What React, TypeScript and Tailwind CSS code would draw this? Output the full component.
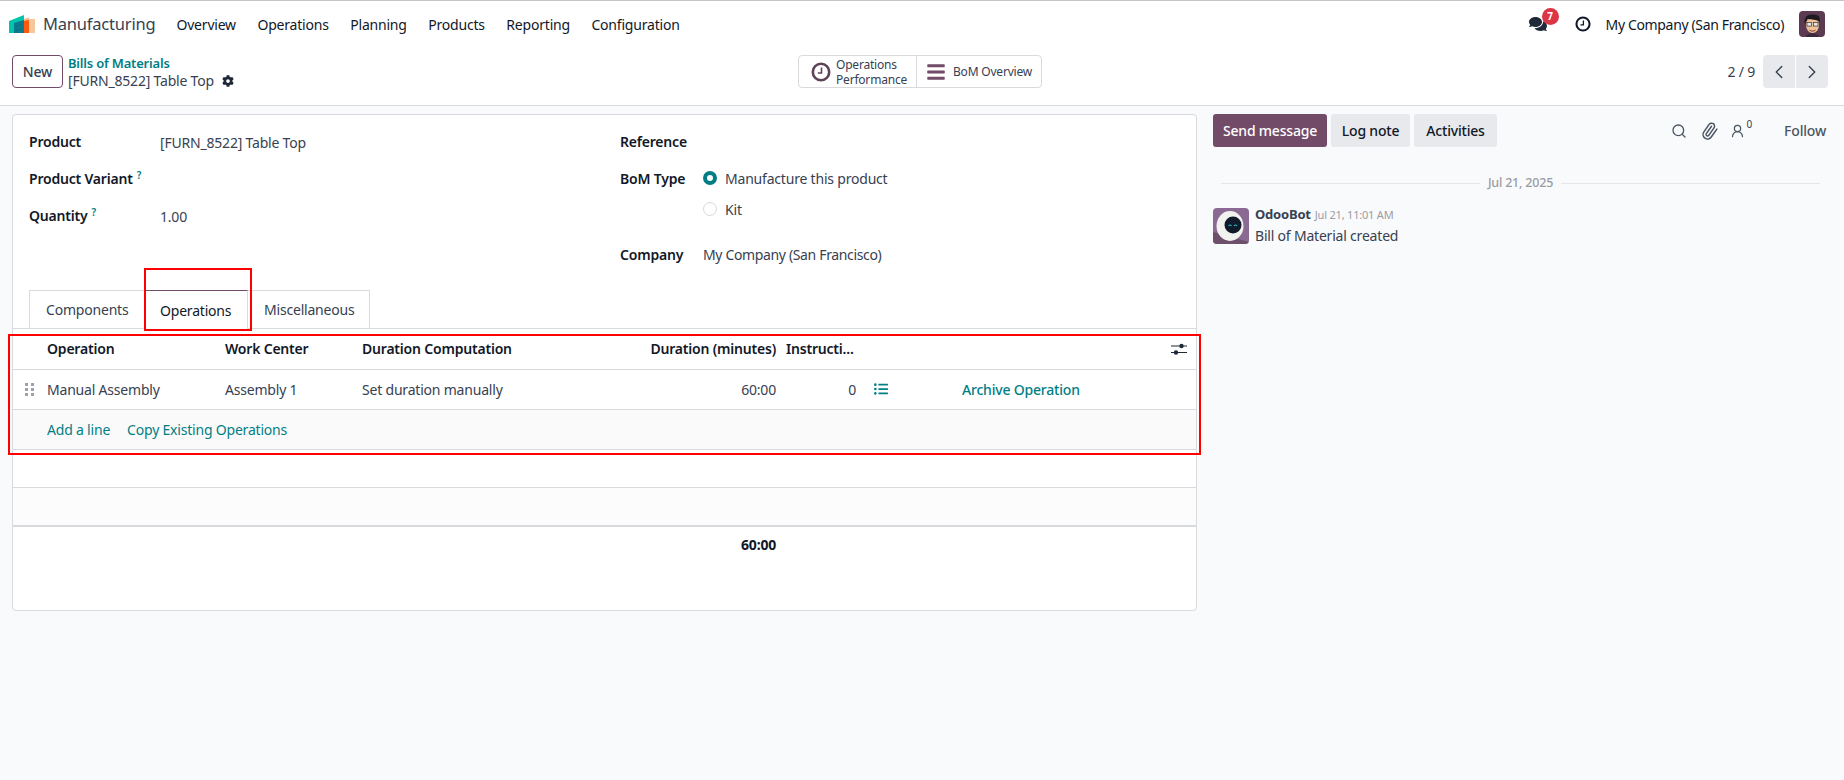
import { FaBars, FaCog, FaComments, FaListUl } from "react-icons/fa";
import { LuChevronLeft, LuChevronRight, LuPaperclip, LuSearch, LuUserRound } from "react-icons/lu";

const menu = ["Overview", "Operations", "Planning", "Products", "Reporting", "Configuration"];

const ClockIcon = ({ className }: { className: string }) => (
  <svg viewBox="0 0 20 20" className={className} fill="none" stroke="currentColor">
    <circle cx="10" cy="10" r="8.2" strokeWidth="2.6" />
    <path d="M10.5 5.5V11H6.8" strokeWidth="1.6" />
  </svg>
);

const Logo = () => (
  <svg viewBox="0 0 26 18" className="w-[26px] h-[18px] shrink-0">
    <path d="M0 6 L15 0 V18 H0Z" fill="#00c4ad" />
    <path d="M5 8 L15 5 H17 V18 H5Z" fill="#0c7a8c" />
    <path d="M15 4 L20 2.5 V18 H15Z" fill="#f0b98a" />
    <path d="M15 6 L20 5 V18 H15Z" fill="#fa5a10" />
    <path d="M20 4 H26 V18 H20Z" fill="#f3c79a" />
    <g fill="#0a5a6c">
      <circle cx="8" cy="11" r=".6" />
      <circle cx="11" cy="10" r=".6" />
      <circle cx="8" cy="15" r=".6" />
      <circle cx="12" cy="14" r=".6" />
    </g>
  </svg>
);

const UserAvatar = () => (
  <svg viewBox="0 0 26 26" className="w-[26px] h-[26px] rounded-[4px] shrink-0">
    <rect width="26" height="26" fill="#5b3a52" />
    <path d="M7 26 C7 21 19 21 20 26Z" fill="#3a2a3a" />
    <ellipse cx="13.5" cy="14" rx="6.5" ry="8" fill="#f0c39a" />
    <path d="M6 13 C4 6 9 3 14 3.5 C19 3 22 6 20.5 11 C18 8 12 9 8 8 C7.5 10 7 11 6 13Z" fill="#1d1a22" />
    <rect x="8" y="11.5" width="4.6" height="3.6" fill="#dfe7e8" stroke="#333" strokeWidth=".7" />
    <rect x="14.4" y="11.5" width="4.6" height="3.6" fill="#dfe7e8" stroke="#333" strokeWidth=".7" />
    <path d="M10.5 19 C12 20.5 15 20.5 16.5 19" stroke="#7a3b2a" strokeWidth="1" fill="none" />
  </svg>
);

const BotAvatar = () => (
  <svg viewBox="0 0 36 36" className="w-9 h-9 rounded-[4px] shrink-0">
    <rect width="36" height="36" fill="#8a6a93" />
    <path d="M0 24 L36 34 V36 H0Z" fill="#6e4f6c" />
    <ellipse cx="17" cy="18" rx="13.5" ry="15" fill="#f2f2ef" />
    <circle cx="20" cy="17" r="8.5" fill="#101a2b" />
    <path d="M15.5 18 q1.5 -2 3 0 M21 18 q1.5 -2 3 0" stroke="#27b5c2" strokeWidth="1.2" fill="none" />
  </svg>
);

const Field = ({ label, hint, value, className }: { label: string; hint?: boolean; value?: string; className: string }) => (
  <div className={`flex items-center ${className}`}>
    <div className="w-[131px] font-semibold text-[#111827] shrink-0">
      {label}
      {hint && <sup className="ml-[4px] text-[10px] text-[#017e84] font-semibold">?</sup>}
    </div>
    <div className="pt-[2px]">{value}</div>
  </div>
);

export default function App() {
  return (
    <div className="relative h-[780px] overflow-hidden bg-[#f9fafb] text-[14px] text-[#374151] font-['Noto_Sans',sans-serif] tracking-[-0.2px]">
      <header className="h-[47px] bg-white border-t border-t-[#c4c4c4] flex items-center pl-[9px] pr-[19px]">
        <Logo />
        <span className="ml-2 text-[16.5px] text-[#374151]">Manufacturing</span>
        <nav className="flex ml-[21px] gap-[21.5px] text-[#111827]">
          {menu.map((m) => (
            <span key={m}>{m}</span>
          ))}
        </nav>
        <div className="ml-auto flex items-center text-[#111827]">
          <div className="relative mr-[28px]">
            <FaComments className="w-[18px] h-[16px] text-[#1f2937]" />
            <span className="absolute -top-[8px] left-[13px] w-[17px] h-[17px] rounded-full bg-[#dc3545] text-white text-[10px] font-bold flex items-center justify-center">
              7
            </span>
          </div>
          <ClockIcon className="w-[16px] h-[16px] text-[#111827]" />
          <span className="ml-[15px] mr-[15px] tracking-[-0.35px]">My Company (San Francisco)</span>
          <UserAvatar />
        </div>
      </header>

      <div className="h-[59px] bg-white border-b border-b-[#d8dadd] flex items-start pt-[8px] pl-[12px] pr-[16px]">
        <button className="w-[51px] h-[33px] border border-[#714b67] rounded-[4px] text-[#374151] font-medium">New</button>
        <div className="ml-[5px] w-[730px] leading-[18px] -mt-[1px]">
          <div className="text-[#017e84] font-semibold text-[13px]">Bills of Materials</div>
          <div className="flex items-center">
            [FURN_8522] Table Top
            <FaCog className="ml-[8px] w-[12px] h-[12px] text-[#1f2937]" />
          </div>
        </div>
        <div className="flex h-[33px] w-[244px] border border-[#d8dadd] rounded-[4px] text-[12px]">
          <div className="w-[118px] flex items-center pl-[12px] border-r border-r-[#d8dadd]">
            <ClockIcon className="w-[20px] h-[20px] text-[#5f4458]" />
            <span className="ml-[5px] leading-[15px]">
              Operations
              <br />
              Performance
            </span>
          </div>
          <div className="flex-1 flex items-center pl-[9px]">
            <FaBars className="w-[20px] h-[20px] text-[#714b67]" />
            <span className="ml-[7px]">BoM Overview</span>
          </div>
        </div>
        <div className="ml-auto flex items-center">
          <span className="mr-[8px]">2 / 9</span>
          <div className="flex gap-px">
            <button className="w-[32px] h-[33px] bg-[#e7e9ed] rounded-l-[4px] flex items-center justify-center">
              <LuChevronLeft className="w-[22px] h-[22px]" strokeWidth={1.5} />
            </button>
            <button className="w-[32px] h-[33px] bg-[#e7e9ed] rounded-r-[4px] flex items-center justify-center">
              <LuChevronRight className="w-[22px] h-[22px]" strokeWidth={1.5} />
            </button>
          </div>
        </div>
      </div>

      <main className="flex items-start pt-[8px] pl-[12px]">
        <section className="w-[1185px] h-[497px] bg-white border border-[#d8dadd] rounded-[4px] shrink-0">
          <div className="flex h-[175px] pt-[14px] pl-[16px]">
            <div className="w-[591px]">
              <Field label="Product" value="[FURN_8522] Table Top" className="h-[24px]" />
              <Field label="Product Variant" hint className="h-[24px] mt-[13px]" />
              <Field label="Quantity" hint value="1.00" className="h-[24px] mt-[13px]" />
            </div>
            <div>
              <div className="h-[24px] flex items-center font-semibold text-[#111827]">Reference</div>
              <div className="flex mt-[13px]">
                <div className="w-[83px] h-[24px] flex items-center font-semibold text-[#111827]">BoM Type</div>
                <div>
                  <div className="h-[24px] flex items-center">
                    <span className="w-[14px] h-[14px] rounded-full border-[4px] border-[#017e84] bg-white mr-[8px]" />
                    Manufacture this product
                  </div>
                  <div className="h-[24px] mt-[7px] flex items-center">
                    <span className="w-[14px] h-[14px] rounded-full border border-[#d8dadd] bg-white mr-[8px]" />
                    Kit
                  </div>
                </div>
              </div>
              <div className="flex mt-[21px] h-[24px] items-center">
                <div className="w-[83px] font-semibold text-[#111827]">Company</div>
                <div className="tracking-[-0.35px]">My Company (San Francisco)</div>
              </div>
            </div>
          </div>

          <div className="flex pl-[16px] h-[39px] border-b border-b-[#d8dadd]">
            <div className="w-[116px] border border-[#d8dadd] border-b-0 flex items-center pl-[16px]">Components</div>
            <div className="relative w-[103px] h-[39px] bg-white border-t border-t-[#714b67] border-r border-r-[#d8dadd] flex items-center pl-[15px] text-[#111827]">
              Operations
            </div>
            <div className="w-[122px] border border-l-0 border-[#d8dadd] border-b-0 flex items-center pl-[16px]">Miscellaneous</div>
          </div>

          <table className="w-full table-fixed border-collapse">
            <colgroup>
              <col className="w-[34px]" />
              <col className="w-[178px]" />
              <col className="w-[137px]" />
              <col className="w-[284px]" />
              <col className="w-[130px]" />
              <col className="w-[80px]" />
              <col className="w-[87px]" />
              <col />
            </colgroup>
            <thead>
              <tr className="h-[40px] border-b border-b-[#d8dadd] text-[#111827] font-semibold text-left">
                <th />
                <th className="font-semibold">Operation</th>
                <th className="font-semibold">Work Center</th>
                <th className="font-semibold">Duration Computation</th>
                <th className="font-semibold text-right whitespace-nowrap">
                  <span className="-ml-[40px]">Duration (minutes)</span>
                </th>
                <th className="font-semibold pl-[10px] whitespace-nowrap">Instructi...</th>
                <th />
                <th className="pr-[9px]">
                  <svg viewBox="0 0 16 14" className="w-[16px] h-[14px] ml-auto" fill="none" stroke="#1f2937">
                    <path d="M0 4H16M0 10.5H16" strokeWidth="1.2" />
                    <circle cx="10.5" cy="4" r="2.2" fill="#1f2937" stroke="none" />
                    <circle cx="5" cy="10.5" r="2.2" fill="#1f2937" stroke="none" />
                  </svg>
                </th>
              </tr>
            </thead>
            <tbody>
              <tr className="h-[40px] border-b border-b-[#d8dadd]">
                <td>
                  <div className="grid grid-cols-2 gap-[2px] w-[9px] ml-[12px]">
                    {[0, 1, 2, 3, 4, 5].map((d) => (
                      <span key={d} className="w-[3px] h-[3px] bg-[#9aa3ad]" />
                    ))}
                  </div>
                </td>
                <td>Manual Assembly</td>
                <td>Assembly 1</td>
                <td>Set duration manually</td>
                <td className="text-right">60:00</td>
                <td className="text-right">0</td>
                <td colSpan={2}>
                  <div className="flex items-center">
                    <FaListUl className="w-[14px] h-[14px] text-[#017e84] ml-[18px]" />
                    <span className="ml-[74px] text-[#017e84] font-medium">Archive Operation</span>
                  </div>
                </td>
              </tr>
              <tr className="h-[40px] border-b border-b-[#d8dadd] bg-[#fafafa] text-[#017e84]">
                <td />
                <td colSpan={7}>
                  <span>Add a line</span>
                  <span className="ml-[17px]">Copy Existing Operations</span>
                </td>
              </tr>
              <tr className="h-[38px] border-b border-b-[#d8dadd]">
                <td colSpan={8} />
              </tr>
              <tr className="h-[39px] border-b-2 border-b-[#d8dadd] bg-[#fcfcfc]">
                <td colSpan={8} />
              </tr>
              <tr className="h-[36px] font-bold text-[#111827]">
                <td colSpan={4} />
                <td className="text-right">60:00</td>
                <td colSpan={3} />
              </tr>
            </tbody>
          </table>
        </section>

        <aside className="flex-1 pl-[16px] pr-[18px]">
          <div className="flex items-center h-[33px]">
            <button className="w-[114px] h-[33px] rounded-[3px] bg-[#714b67] text-white font-medium">Send message</button>
            <button className="w-[79px] h-[33px] ml-[4px] rounded-[3px] bg-[#e7e9ed] text-[#111827] font-medium">Log note</button>
            <button className="w-[83px] h-[33px] ml-[4px] rounded-[3px] bg-[#e7e9ed] text-[#111827] font-medium">Activities</button>
            <LuSearch className="ml-auto w-[16px] h-[16px] text-[#4b5563]" />
            <LuPaperclip className="ml-[14px] w-[18px] h-[18px] text-[#4b5563] rotate-[-10deg]" />
            <LuUserRound className="ml-[11px] w-[15px] h-[16px] text-[#4b5563]" />
            <sup className="ml-[2px] text-[10px] -mt-[4px]">0</sup>
            <span className="ml-[32px] font-medium text-[#4b5563]">Follow</span>
          </div>
          <div className="flex items-center mt-[27px] h-[18px] pl-[8px] pr-[6px] gap-[8px] text-[12.5px] text-[#9a9ca5] font-medium">
            <div className="flex-1 h-px bg-[#e4e6e9]" />
            Jul 21, 2025
            <div className="flex-1 h-px bg-[#e4e6e9]" />
          </div>
          <div className="flex mt-[16px]">
            <BotAvatar />
            <div className="ml-[6px] -mt-[2px]">
              <div className="flex items-baseline leading-[16px]">
                <span className="font-bold text-[#374151] text-[13px]">OdooBot</span>
                <span className="ml-[4px] text-[11px] text-[#9a9ca5]">Jul 21, 11:01 AM</span>
              </div>
              <div className="mt-[2px]">Bill of Material created</div>
            </div>
          </div>
        </aside>
      </main>

      {/* red annotation frames drawn on top of the screenshot */}
      <div className="absolute left-[144px] top-[268px] w-[108px] h-[63px] border-2 border-[#f00]" />
      <div className="absolute left-[8px] top-[334px] w-[1193px] h-[121px] border-2 border-[#f00]" />
    </div>
  );
}
